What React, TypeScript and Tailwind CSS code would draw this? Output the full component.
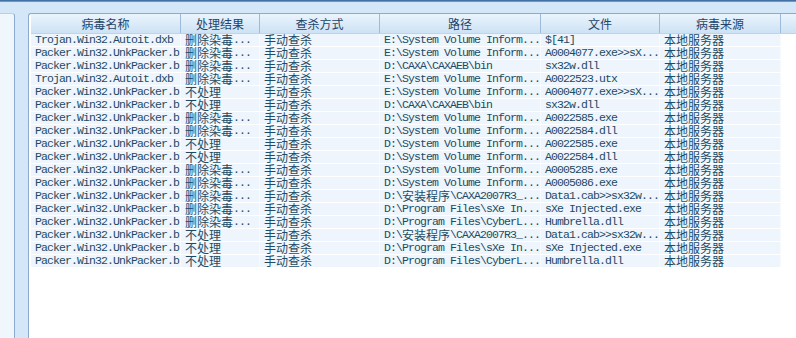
import React from "react";

type Row = [string, string, string, string, string, string];

const PK = "Packer.Win32.UnkPacker.b";
const TJ = "Trojan.Win32.Autoit.dxb";
const DEL = "删除染毒...";
const NO = "不处理";
const SVI_E = "E:\\System Volume Inform...";
const SVI_D = "D:\\System Volume Inform...";
const CAXA = "D:\\CAXA\\CAXAEB\\bin";
const SETUP = "D:\\安装程序\\CAXA2007R3_...";
const SXE = "D:\\Program Files\\sXe In...";
const CYB = "D:\\Program Files\\CyberL...";

const rows: Row[] = [
    [TJ, DEL, "手动查杀", SVI_E, "$[41]", "本地服务器"],
    [PK, DEL, "手动查杀", SVI_E, "A0004077.exe>>sX...", "本地服务器"],
    [PK, DEL, "手动查杀", CAXA, "sx32w.dll", "本地服务器"],
    [TJ, DEL, "手动查杀", SVI_E, "A0022523.utx", "本地服务器"],
    [PK, NO, "手动查杀", SVI_E, "A0004077.exe>>sX...", "本地服务器"],
    [PK, NO, "手动查杀", CAXA, "sx32w.dll", "本地服务器"],
    [PK, DEL, "手动查杀", SVI_D, "A0022585.exe", "本地服务器"],
    [PK, DEL, "手动查杀", SVI_D, "A0022584.dll", "本地服务器"],
    [PK, NO, "手动查杀", SVI_D, "A0022585.exe", "本地服务器"],
    [PK, NO, "手动查杀", SVI_D, "A0022584.dll", "本地服务器"],
    [PK, DEL, "手动查杀", SVI_D, "A0005285.exe", "本地服务器"],
    [PK, DEL, "手动查杀", SVI_D, "A0005086.exe", "本地服务器"],
    [PK, DEL, "手动查杀", SETUP, "Data1.cab>>sx32w...", "本地服务器"],
    [PK, DEL, "手动查杀", SXE, "sXe Injected.exe", "本地服务器"],
    [PK, DEL, "手动查杀", CYB, "Humbrella.dll", "本地服务器"],
    [PK, NO, "手动查杀", SETUP, "Data1.cab>>sx32w...", "本地服务器"],
    [PK, NO, "手动查杀", SXE, "sXe Injected.exe", "本地服务器"],
    [PK, NO, "手动查杀", CYB, "Humbrella.dll", "本地服务器"],
];

const headers = ["病毒名称", "处理结果", "查杀方式", "路径", "文件", "病毒来源"];
const widths = ["w-[150px]", "w-[79px]", "w-[120px]", "w-[161px]", "w-[119px]", "w-[121px]"];

// ascii runs in a narrow mono face, the rest in CJK, like the old SimSun look
function MixedText({ text }: { text: string }) {
    const runs = text.match(/[\x00-\x7f]+|[^\x00-\x7f]+/g) ?? [];
    return (
        <>
            {runs.map((run, i) =>
                /^[\x00-\x7f]/.test(run) ? (
                    <span key={i} className="inline-block align-top h-[12px] whitespace-pre font-['Liberation_Mono',monospace] text-[11.5px] leading-[12px] tracking-[-0.9px]">
                        {run}
                    </span>
                ) : (
                    <span key={i} className="inline-block align-top h-[12px] font-['Noto_Sans_CJK_SC',sans-serif] text-[12px] leading-[12px]">
                        {run}
                    </span>
                )
            )}
        </>
    );
}

export default function App() {
    return (
        <div className="w-[796px] h-[338px] overflow-hidden bg-[#d4e7f8] flex flex-col">
            {/* top band */}
            <div className="h-[2px] bg-gradient-to-b from-[#2f5f96] to-[#7fa9d6]" />
            <div className="h-[11px]" />

            <div className="flex flex-1 min-h-0">
                {/* left pane */}
                <div className="w-[15px] bg-[#eff7fd] border-t border-r border-[#8ea9cf] rounded-tr-[3px] border-t-[#b9cfe6]" />
                <div className="w-[13px]" />

                {/* table pane */}
                <div className="flex-1 bg-white border-t border-l border-[#8ea9cf] rounded-tl-[3px] pl-[2px] flex flex-col">
                    {/* header */}
                    <div className="flex h-[20px] bg-gradient-to-b from-[#eaf4fd] to-[#cde2f5] border-b border-[#bcd4ec] text-[#234468] font-['Noto_Sans_CJK_SC',sans-serif] text-[12px] leading-[14px]">
                        {headers.map((h, i) => (
                            <div key={h} className={`${widths[i]} shrink-0 flex items-center justify-center border-r border-[#9dbad9]`}>
                                {h}
                            </div>
                        ))}
                        <div className="flex-1" />
                    </div>

                    {/* rows */}
                    <div className="flex flex-col text-[#1d4b63]">
                        {rows.map((r, ri) => (
                            <div key={ri} className="flex h-[13px] w-[750px] bg-[#eef5fc] border-b border-white">
                                {r.map((cell, ci) => (
                                    <div
                                        key={ci}
                                        className={`${widths[ci]} shrink-0 h-[12px] pl-[4px] whitespace-nowrap leading-[12px] border-r border-[#f8fbfe]`}
                                    >
                                        <MixedText text={cell} />
                                    </div>
                                ))}
                            </div>
                        ))}
                    </div>
                </div>
            </div>
        </div>
    );
}
